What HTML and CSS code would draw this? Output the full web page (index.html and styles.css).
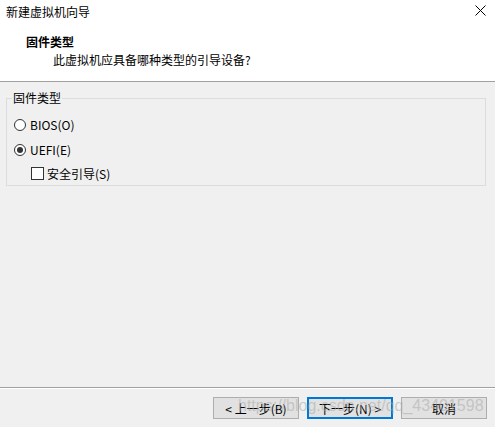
FILE: index.html
```html
<!DOCTYPE html>
<html lang="zh-CN">

<head>
    <meta charset="UTF-8">
    <title>新建虚拟机向导</title>
    <link rel="stylesheet" href="styles.css">
</head>

<body>

    <div class="top">
        <div class="titlebar">
            <span class="title">新建虚拟机向导</span>
            <svg class="close" width="11" height="11" viewBox="0 0 11 11">
                <path d="M0.5 0.5 L10.5 10.5 M10.5 0.5 L0.5 10.5" stroke="#000" stroke-width="1" fill="none" />
            </svg>
        </div>
        <div class="header">
            <div class="header-title">固件类型</div>
            <div class="header-sub">此虚拟机应具备哪种类型的引导设备?</div>
        </div>
    </div>

    <div class="content">
        <fieldset class="group">
            <legend>固件类型</legend>
            <div class="option">
                <span class="radio"></span>
                <span>BIOS(O)</span>
            </div>
            <div class="option">
                <span class="radio checked"></span>
                <span>UEFI(E)</span>
            </div>
            <div class="option sub">
                <span class="check"></span>
                <span>安全引导(S)</span>
            </div>
        </fieldset>
    </div>

    <div class="footer">
        <div class="buttons">
            <button class="btn">&lt; 上一步(B)</button>
            <button class="btn default">下一步(N) &gt;</button>
            <button class="btn">取消</button>
        </div>
        <div class="watermark">https://blog.csdn.net/qq_43401598</div>
    </div>

</body>

</html>
```

FILE: styles.css
```css
* {
    box-sizing: border-box;
}

body {
    margin: 0;
    width: 495px;
    height: 427px;
    display: flex;
    flex-direction: column;
    background: #f0f0f0;
    color: #000;
    font-family: "Noto Sans CJK SC", "Noto Sans", sans-serif;
    font-size: 12px;
    overflow: hidden;
}

.top {
    height: 82px;
    background: #fff;
    border-bottom: 1px solid #a0a0a0;
}

.titlebar {
    height: 24px;
    padding: 0 9px 0 6px;
    display: flex;
    align-items: center;
    justify-content: space-between;
}

.title {
    line-height: 24px;
}

.close {
    margin-top: -4px;
}

.header {
    padding-left: 26px;
    padding-top: 9px;
}

.header-title {
    font-weight: bold;
    line-height: 18px;
}

.header-sub {
    padding-left: 27px;
    line-height: 18px;
}

.content {
    flex: 1;
    padding: 8px 9px 0 6px;
}

.group {
    margin: 0;
    padding: 6px 5px 1px 7px;
    border: 1px solid #dcdcdc;
}

.group legend {
    padding: 0 1px;
    line-height: 16px;
    margin-left: -2px;
}

.option {
    height: 25px;
    display: flex;
    align-items: center;
    gap: 4px;
}

.option.sub {
    height: 22px;
    padding-left: 17px;
    gap: 3px;
}

.radio {
    width: 12px;
    height: 12px;
    border: 1px solid #333;
    border-radius: 50%;
    background: #fff;
    display: flex;
    align-items: center;
    justify-content: center;
}

.radio.checked::after {
    content: "";
    width: 6px;
    height: 6px;
    border-radius: 50%;
    background: #333;
}

.check {
    width: 13px;
    height: 13px;
    border: 1px solid #333;
    background: #fff;
}

.footer {
    position: relative;
    height: 40px;
    border-top: 1px solid #a0a0a0;
}

.buttons {
    height: 100%;
    border-top: 1px solid #fff;
    padding: 8px 8px 0 0;
    display: flex;
    justify-content: flex-end;
    align-items: flex-start;
    gap: 8px;
}

.btn {
    width: 86px;
    height: 22px;
    padding: 0;
    background: #e1e1e1;
    border: 1px solid #adadad;
    border-radius: 0;
    font-family: inherit;
    font-size: 12px;
    color: #000;
}

.btn.default {
    border: 2px solid #0078d7;
}

.watermark {
    position: absolute;
    left: 238px;
    top: 9px;
    font-family: "Liberation Sans", Arial, sans-serif;
    font-size: 16px;
    color: rgba(170, 170, 170, 0.55);
    white-space: nowrap;
    pointer-events: none;
}
```
